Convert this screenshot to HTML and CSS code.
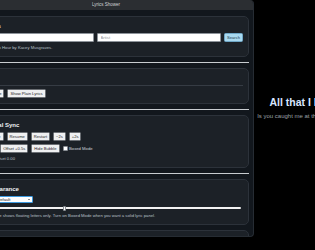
FILE: index.html
```html
<!DOCTYPE html>
<html lang="en">
  <head>
    <meta charset="UTF-8" />
    <meta name="viewport" content="width=device-width, initial-scale=1.0" />
    <title>Lyrics Shower</title>
    <link rel="stylesheet" href="styles.css">
  </head>

  <body>
    <div class="page">
      <div class="app-window">
        <div class="title-bar">Lyrics Shower</div>

        <div class="window-body">
          <section class="panel">
            <h2>Find Lyrics</h2>
            <div class="search-row">
              <input type="text" class="text-input" placeholder="Song title" />
              <input type="text" class="text-input" placeholder="Artist" />
              <button class="btn btn-primary">Search</button>
            </div>
            <p class="status">Showing: Golden Hour by Kacey Musgraves.</p>
          </section>

          <div class="divider"></div>

          <section class="panel">
            <h2>Lyrics</h2>
            <div class="progress-track"></div>
            <div class="btn-row">
              <button class="btn">Open Lyrics File</button>
              <button class="btn">Show Plain Lyrics</button>
            </div>
          </section>

          <div class="divider"></div>

          <section class="panel">
            <h2>Live Manual Sync</h2>
            <div class="btn-row">
              <button class="btn">Play</button>
              <button class="btn">Pause</button>
              <button class="btn">Resume</button>
              <button class="btn">Restart</button>
              <button class="btn">−2s</button>
              <button class="btn">+2s</button>
            </div>
            <div class="btn-row">
              <button class="btn">Offset −0.5s</button>
              <button class="btn">Offset +0.5s</button>
              <button class="btn">Hide Bubble</button>
              <label class="check">
                <input type="checkbox" />
                Boxed Mode
              </label>
            </div>
            <p class="status">Line 0 of 24 · Offset 0.00</p>
          </section>

          <div class="divider"></div>

          <section class="panel">
            <h2>Lyric Appearance</h2>
            <div class="select-wrap">
              <select class="select">
                <option>Color theme: Default</option>
              </select>
            </div>
            <input type="range" class="range" min="0" max="100" value="35" />
            <p class="status">The bubble mode shows floating letters only. Turn on Boxed Mode when you want a solid lyric panel.</p>
          </section>

          <section class="panel">
            <h2>Shortcuts</h2>
            <p class="status">Space to pause, arrows to nudge timing.</p>
          </section>
        </div>
      </div>

      <div class="lyrics-stage">
        <p class="lyric-current">All that I know</p>
        <p class="lyric-next">Is you caught me at the golden hour</p>
      </div>
    </div>
  </body>
</html>
```

FILE: styles.css
```css
body {
  margin: 0;
  padding: 0;
  background-color: #000;
  font-family: "Liberation Sans", Arial, sans-serif;
  overflow: hidden;
}

.page {
  display: flex;
  align-items: flex-start;
}

/* control window, partly off the left edge */
.app-window {
  flex: 0 0 296px;
  margin-left: -42px;
  height: 237px;
  box-sizing: border-box;
  background-color: #12171d;
  border: 1px solid #262c33;
  border-top: none;
  border-radius: 4px;
  overflow: hidden;
}

.title-bar {
  height: 10px;
  line-height: 10px;
  background-color: #2b2e32;
  color: #d0d3d6;
  font-size: 4.5px;
  text-align: center;
}

.window-body {
  display: flex;
  flex-direction: column;
  gap: 5px;
  padding: 6px 4px;
}

.panel {
  display: flex;
  flex-direction: column;
  gap: 3px;
  padding: 5px;
  background-color: #1c2127;
  border: 1px solid #2c323a;
  border-radius: 5px;
}

.panel h2 {
  margin: 0;
  font-size: 6px;
  line-height: 8px;
  color: #eef1f4;
  white-space: nowrap;
}

.divider {
  height: 1px;
  background-color: #c8ccd0;
}

.search-row {
  display: flex;
  gap: 3px;
}

.text-input {
  flex: 1;
  min-width: 0;
  height: 9px;
  box-sizing: border-box;
  margin: 0;
  padding: 0 3px;
  border: 1px solid #8d939a;
  border-radius: 1px;
  background-color: #fff;
  font-family: inherit;
  font-size: 4.2px;
}

.text-input::placeholder {
  color: #9a9a9a;
}

.status {
  margin: 0;
  font-size: 4.2px;
  line-height: 6px;
  color: #b9c0c8;
  white-space: nowrap;
}

.btn-row {
  display: flex;
  align-items: center;
  gap: 3px;
}

.btn {
  height: 9px;
  box-sizing: border-box;
  margin: 0;
  padding: 1px 2px;
  border: 1px solid #6b6f74;
  border-radius: 1.5px;
  background-color: #eff0f1;
  color: #1e2125;
  font-family: inherit;
  font-size: 4.1px;
  line-height: 5px;
  white-space: nowrap;
}

.btn-primary {
  background-color: #a9d9f0;
  border-color: #6fa7c7;
  color: #213a4a;
}

.progress-track {
  height: 1px;
  background-color: #363c44;
}

.check {
  display: flex;
  align-items: center;
  gap: 1.5px;
  font-size: 4.2px;
  color: #cfd4d9;
  white-space: nowrap;
}

.check input {
  appearance: none;
  width: 5px;
  height: 5px;
  margin: 0;
  background-color: #fff;
  border: 0.5px solid #8a8f95;
  border-radius: 1px;
}

.select-wrap {
  position: relative;
  display: flex;
  width: 64px;
}

.select-wrap::after {
  content: "";
  position: absolute;
  right: 3px;
  top: 3px;
  border-left: 1.5px solid transparent;
  border-right: 1.5px solid transparent;
  border-top: 1.5px solid #222;
}

.select {
  appearance: none;
  width: 100%;
  height: 7px;
  box-sizing: border-box;
  margin: 0;
  padding: 0 2px;
  border: 1px solid #3d9be0;
  border-radius: 1px;
  background-color: #fff;
  color: #222;
  font-family: inherit;
  font-size: 4.2px;
  line-height: 5px;
}

.range {
  -webkit-appearance: none;
  appearance: none;
  width: 272px;
  height: 2px;
  margin: 1px 0;
  background-color: #f2f2f2;
  border-radius: 1px;
}

.range::-webkit-slider-thumb {
  -webkit-appearance: none;
  width: 3px;
  height: 5px;
  background-color: #fff;
  border: 0.5px solid #8a8f95;
  border-radius: 1px;
}

/* lyric display */
.lyrics-stage {
  flex: 0 0 102px;
  padding-top: 96px;
  text-align: center;
  white-space: nowrap;
}

.lyric-current {
  margin: 0;
  font-size: 10.5px;
  line-height: 12.6px;
  font-weight: bold;
  color: #d8e6ff;
}

.lyric-next {
  margin: 4px 0 0;
  font-size: 6px;
  line-height: 7.2px;
  color: #9aa0a6;
}
```
